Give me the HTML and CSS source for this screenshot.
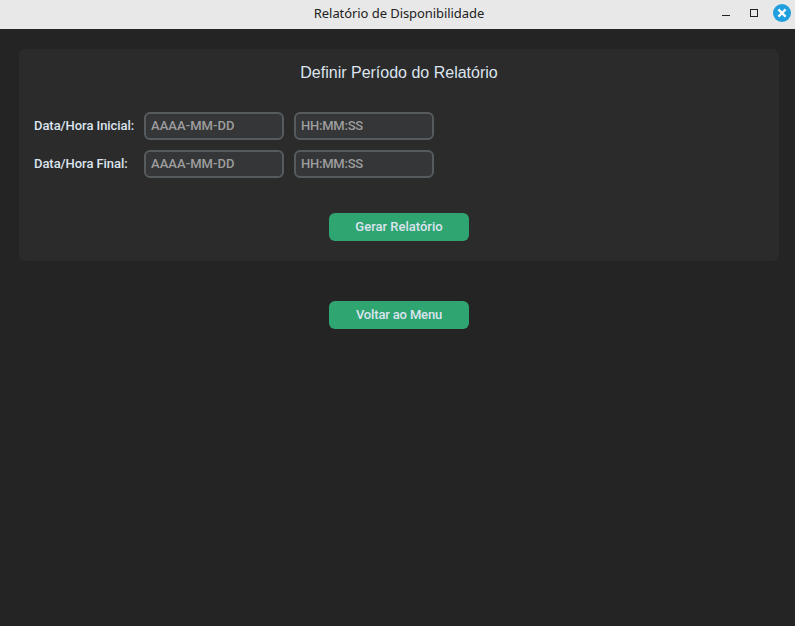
FILE: index.html
```html
<!DOCTYPE html>
<html lang="pt-BR">
<head>
<meta charset="utf-8">
<title>Relatório de Disponibilidade</title>
<link rel="stylesheet" href="styles.css">
</head>
<body>
<header class="titlebar">
  <h1 class="window-title">Relatório de Disponibilidade</h1>
  <svg class="controls" width="75" height="28" viewBox="0 0 75 28">
    <rect x="2" y="15" width="8" height="1" fill="#222"/>
    <rect x="30.5" y="9.5" width="7" height="7" fill="none" stroke="#222"/>
    <circle cx="62" cy="13" r="9" fill="#209fdf"/>
    <path d="M58.4 9.4l7.2 7.2M65.6 9.4l-7.2 7.2" stroke="#fff" stroke-width="2.2"/>
  </svg>
</header>
<main class="content">
  <form class="panel">
    <h2 class="heading">Definir Período do Relatório</h2>
    <div class="fields">
      <label class="label" for="d1">Data/Hora Inicial:</label>
      <input class="entry entry-date" id="d1" type="text" placeholder="AAAA-MM-DD">
      <input class="entry entry-time" type="text" placeholder="HH:MM:SS">
      <label class="label" for="d2">Data/Hora Final:</label>
      <input class="entry entry-date" id="d2" type="text" placeholder="AAAA-MM-DD">
      <input class="entry entry-time" type="text" placeholder="HH:MM:SS">
    </div>
    <button class="button" type="button">Gerar Relatório</button>
  </form>
  <button class="button button-back" type="button">Voltar ao Menu</button>
</main>
</body>
</html>
```
FILE: styles.css
```css
* { box-sizing: border-box; }

body {
  margin: 0;
  height: 100vh;
  overflow: hidden;
  background: #242424;
  color: #dce4ee;
  font: 500 13px/28px Roboto, sans-serif;
}

.titlebar {
  display: grid;
  grid-template-columns: 75px 1fr 75px;
  height: 29px;
  background: #e8e8e8;
}

.window-title {
  grid-column: 2;
  margin: 0;
  padding-left: 3px;
  text-align: center;
  color: #222;
  font: 400 13px/27px "Noto Sans", sans-serif;
  letter-spacing: -0.07px;
}

.controls { display: block; }

.content {
  display: flex;
  flex-direction: column;
  align-items: center;
  width: 760px;
  margin: 20px 0 0 19px;
}

.panel {
  display: flex;
  flex-direction: column;
  align-items: center;
  width: 100%;
  height: 212px;
  padding: 10px 15px 20px;
  border-radius: 6px;
  background: #2b2b2b;
}

.heading {
  margin: 0;
  font: 400 16px/28px "Liberation Sans", sans-serif;
}

.fields {
  display: grid;
  grid-template-columns: 100px 140px 140px;
  gap: 10px;
  align-self: flex-start;
  margin: 25px 0 35px;
}

.label {
  white-space: nowrap;
  letter-spacing: -0.06px;
}

.entry {
  width: 140px;
  height: 28px;
  padding: 0 5px 1px;
  border: 2px solid #565b5e;
  border-radius: 6px;
  background: #343638;
  color: #dce4ee;
  font: inherit;
  line-height: 22px;
}

.entry-date { letter-spacing: 0.05px; }
.entry-time { letter-spacing: -0.22px; }

.entry::placeholder { color: #9e9e9e; opacity: 1; }

.button {
  width: 140px;
  height: 28px;
  padding: 0;
  border: 0;
  border-radius: 6px;
  background: #2fa572;
  color: #dce4ee;
  font: inherit;
}

.button-back {
  margin-top: 40px;
  letter-spacing: -0.16px;
}
```
